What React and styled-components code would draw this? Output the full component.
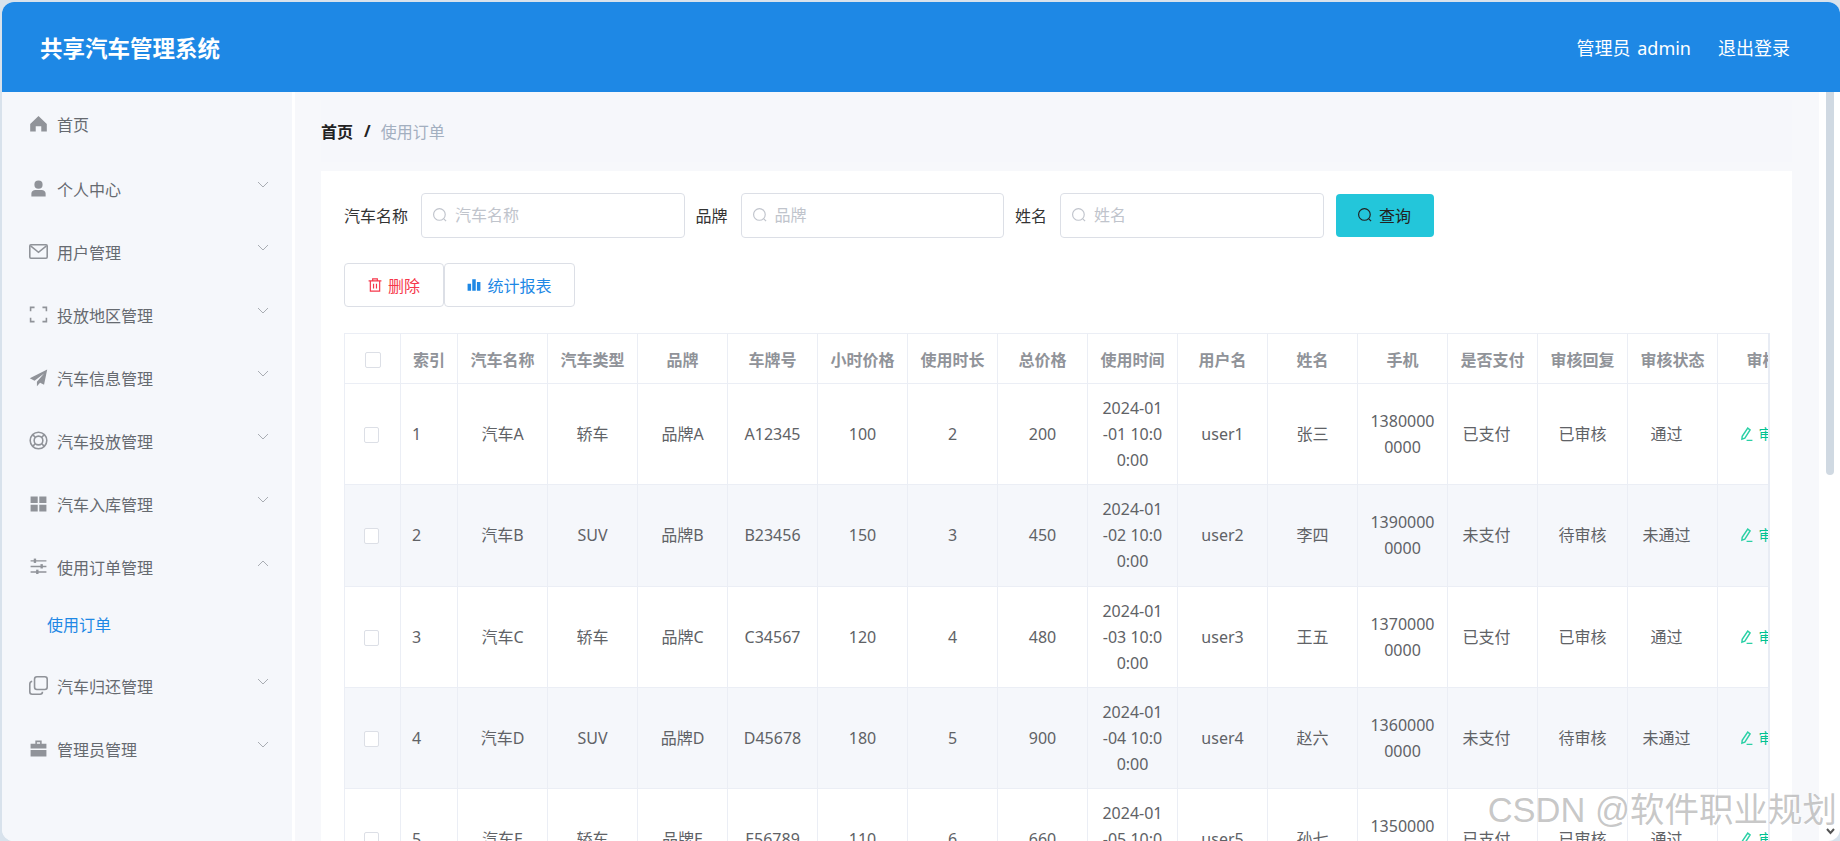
import styled, { createGlobalStyle } from "styled-components";

const GlobalStyle = createGlobalStyle`
  * {
    box-sizing: border-box;
  }

  html,
  body {
    margin: 0;
    height: 100%;
    overflow: hidden;
    font-family: "Noto Sans", "Noto Sans CJK SC", sans-serif;
  }
`;

const Page = styled.div`
  position: relative;
  width: 1840px;
  height: 841px;
  padding: 2px 0 0 2px;
  background-color: #d8e2ec;
  overflow: hidden;
`;

const Frame = styled.div`
  display: flex;
  flex-direction: column;
  height: 100%;
  border-radius: 12px;
  background-color: #fff;
  overflow: hidden;
`;

const TopBar = styled.header`
  display: flex;
  flex: none;
  align-items: center;
  justify-content: space-between;
  height: 90px;
  padding: 0 50px 0 38px;
  background-color: #1e88e5;
  color: #fff;
`;

const Title = styled.h1`
  margin: 0;
  font-size: 22.5px;
  font-weight: 700;
`;

const TopLinks = styled.div`
  display: flex;
  gap: 27px;
  font-size: 18px;
`;

const AdminName = styled.span`
  word-spacing: 2px;
`;

const Body = styled.div`
  display: flex;
  flex: 1;
  min-height: 0;
`;

const Sidebar = styled.nav`
  flex: none;
  width: 290px;
  margin-right: 3px;
  background-color: #f5f7fb;
`;

const NavItem = styled.div`
  display: flex;
  align-items: center;
  height: 63px;
  margin-bottom: ${(p) => (p.$first ? "2px" : "0")};
  padding: 0 23px 0 27px;
  color: #666a70;
  font-size: 16px;
`;

const NavIcon = styled.svg`
  flex: none;
  width: 19px;
  height: 19px;
  margin-right: 9px;
  color: #909399;
`;

const Chevron = styled.svg`
  width: 12px;
  height: 8px;
  margin-left: auto;
  margin-bottom: 7px;
  color: #a9adb3;
`;

const SubItem = styled.div`
  height: 56px;
  padding: 15px 0 0 45px;
  color: #1e88e5;
  font-size: 16px;
  line-height: 24px;
`;

const Main = styled.main`
  display: flex;
  flex: none;
  flex-direction: column;
  width: 1524px;
  padding: 8px 27px 0 26px;
  background-color: #f7f8fb;
`;

const Breadcrumb = styled.div`
  display: flex;
  flex: none;
  align-items: center;
  height: 62px;
  margin-bottom: 9px;
  background-color: #f6f7fb;
  font-size: 16px;
`;

const CrumbHome = styled.span`
  color: #222;
  font-weight: 600;
`;

const CrumbSep = styled.span`
  margin: 0 10px 0 11px;
  color: #222;
  font-weight: 700;
`;

const CrumbCurrent = styled.span`
  color: #a3afc0;
`;

const Card = styled.section`
  flex: 1;
  min-height: 0;
  padding: 22px 0 0 23px;
  background-color: #fff;
  overflow: hidden;
`;

const SearchRow = styled.div`
  display: flex;
  align-items: center;
  gap: 11px;
  height: 44px;
`;

const Field = styled.label`
  display: flex;
  align-items: center;
  gap: 13px;
  color: #333;
  font-size: 16px;
`;

const InputBox = styled.span`
  display: flex;
  align-items: center;
  gap: 8px;
  width: 263.5px;
  height: 45px;
  padding-left: 11px;
  border: 1px solid #dcdfe6;
  border-radius: 4px;
  color: #c0c4cc;
`;

const Input = styled.input`
  flex: 1;
  min-width: 0;
  padding: 0;
  border: 0;
  outline: 0;
  background: transparent;
  font: inherit;
  font-size: 16px;

  &::placeholder {
    color: #c0c4cc;
    opacity: 1;
  }
`;

const SmallIcon = styled.svg`
  flex: none;
  width: 14px;
  height: 14px;
`;

const SearchButton = styled.button`
  display: flex;
  align-items: center;
  justify-content: center;
  gap: 7px;
  width: 98px;
  height: 43px;
  margin-left: 1px;
  padding: 0;
  border: 0;
  border-radius: 4px;
  background-color: #23c6da;
  color: #222;
  font: inherit;
  font-size: 16px;
`;

const ActionRow = styled.div`
  display: flex;
  margin-top: 26px;
`;

const ActionButton = styled.button`
  display: flex;
  align-items: center;
  justify-content: center;
  gap: 6px;
  width: ${(p) => p.$width}px;
  height: 44px;
  padding: 0;
  border: 1px solid #dcdfe6;
  border-radius: 4px;
  background-color: #fff;
  color: ${(p) => p.$color};
  font: inherit;
  font-size: 16px;
`;

const TableWrap = styled.div`
  width: 1426px;
  height: 600px;
  margin-top: 26px;
  border-right: 2px solid #e8ecf4;
  overflow: hidden;
`;

const Table = styled.table`
  width: 1463px;
  border-collapse: collapse;
  table-layout: fixed;
  font-size: 16px;
`;

const HeadCell = styled.th`
  height: 50px;
  padding: 0;
  border: 1px solid #ebeef5;
  color: #909399;
  font-weight: 700;
  text-align: center;
`;

const Row = styled.tr`
  background-color: ${(p) => (p.$striped ? "#f5f7fb" : "#fff")};
`;

const Cell = styled.td`
  height: 101.33px;
  padding: 0 12px 0 ${(p) => (p.$align ? "11px" : "12px")};
  border: 1px solid #ebeef5;
  color: #606266;
  line-height: 26px;
  text-align: ${(p) => p.$align || "center"};
  word-break: break-all;
`;

const Shifted = styled.span`
  padding-right: 12px;
`;

const HeadCheckbox = styled.span`
  display: block;
  width: 16px;
  height: 16px;
  margin: 2px auto 0;
  border: 1px solid #dcdfe6;
  border-radius: 2px;
  background-color: #fff;
`;

const RowCheckbox = styled(HeadCheckbox)`
  width: 15px;
  margin: 2px 0 0 7px;
`;

const ReviewLink = styled.span`
  display: flex;
  align-items: center;
  justify-content: center;
  gap: 6px;
  margin: 0 -12px;
  color: #00c292;
  font-size: 14px;
  white-space: nowrap;
`;

const PencilIcon = styled(SmallIcon)`
  color: #2bd0a6;
`;

const Gutter = styled.div`
  display: flex;
  flex: 1;
  flex-direction: column;
  align-items: flex-start;
  padding-left: 7px;
`;

const ScrollThumb = styled.div`
  width: 8px;
  height: 383px;
  border-radius: 0 0 4px 4px;
  background-color: #d0d9e2;
`;

const ScrollArrow = styled.svg`
  width: 9px;
  height: 7px;
  margin: auto 0 6px;
  color: #555;
`;

const Watermark = styled.div`
  position: absolute;
  right: 3px;
  bottom: 11px;
  color: rgba(120, 120, 120, 0.42);
  font-family: "Liberation Sans", "Noto Sans CJK SC", sans-serif;
  font-size: 34.5px;
  line-height: 40px;
  text-shadow: 1px 1px 1px rgba(255, 255, 255, 0.8);
  white-space: nowrap;
  pointer-events: none;
`;

const icons = {
  home: <path fill="currentColor" d="M12 2.500 1.500 12.500V22h7v-6.500h7V22h7v-9.500z" />,
  user: (
    <path
      fill="currentColor"
      d="M12 2a5.200 5.200 0 1 1 0 10.400A5.200 5.200 0 0 1 12 2zM3 22v-3.600C3 15.500 5.500 14 8 14h8c2.500 0 5 1.500 5 4.400V22z"
    />
  ),
  mail: (
    <g fill="none" stroke="currentColor" strokeWidth="2">
      <rect x="1" y="3.500" width="22" height="17" rx="1.500" />
      <path d="m2 5 10 8 10-8" />
    </g>
  ),
  corners: (
    <path
      fill="none"
      stroke="currentColor"
      strokeWidth="2"
      d="M7 3H2v5M17 3h5v5M7 21H2v-5M17 21h5v-5"
    />
  ),
  send: (
    <path fill="currentColor" d="M23 2 1 13l6 3 12-9-9 10.500V23l4-4.500 5 2.500z" />
  ),
  buoy: (
    <g fill="none" stroke="currentColor" strokeWidth="2">
      <circle cx="12" cy="12" r="10.500" />
      <circle cx="12" cy="12" r="5.500" />
      <path d="m4.500 4.500 3.500 3.500M19.500 4.500 16 8M4.500 19.500 8 16M19.500 19.500 16 16" />
    </g>
  ),
  grid: (
    <path
      fill="currentColor"
      d="M2 3h9v8.500H2zM13 3h9v8.500h-9zM2 13.500h9V22H2zM13 13.500h9V22h-9z"
    />
  ),
  sliders: (
    <g fill="currentColor">
      <path d="M2 4h20v1.800H2zM2 11h20v1.800H2zM2 18h20v1.800H2z" />
      <rect x="6" y="2" width="3" height="5.500" />
      <rect x="14.500" y="9" width="3" height="5.500" />
      <rect x="9" y="16" width="3" height="5.500" />
    </g>
  ),
  copy: (
    <g fill="none" stroke="currentColor" strokeWidth="2">
      <rect x="7" y="1" width="16" height="16" rx="3" />
      <path d="M4 6.500C2 7 1 8 1 10v10c0 2 1 3 3 3h10c2 0 3-1 3-3" />
    </g>
  ),
  case: (
    <path fill="currentColor" d="M8 2h8v4h6v6H2V6h6zm2 2v2h4V4zM2 14h20v8H2z" />
  ),
};

const navItems = [
  { icon: "home", label: "首页", plain: true },
  { icon: "user", label: "个人中心" },
  { icon: "mail", label: "用户管理" },
  { icon: "corners", label: "投放地区管理" },
  { icon: "send", label: "汽车信息管理" },
  { icon: "buoy", label: "汽车投放管理" },
  { icon: "grid", label: "汽车入库管理" },
  { icon: "sliders", label: "使用订单管理", open: true },
  { icon: "copy", label: "汽车归还管理" },
  { icon: "case", label: "管理员管理" },
];

const columns = [
  "索引",
  "汽车名称",
  "汽车类型",
  "品牌",
  "车牌号",
  "小时价格",
  "使用时长",
  "总价格",
  "使用时间",
  "用户名",
  "姓名",
  "手机",
  "是否支付",
  "审核回复",
  "审核状态",
  "审核",
];

const orders = [
  ["1", "汽车A", "轿车", "品牌A", "A12345", "100", "2", "200", "2024-01-01 10:00:00", "user1", "张三", "13800000000", "已支付", "已审核", "通过"],
  ["2", "汽车B", "SUV", "品牌B", "B23456", "150", "3", "450", "2024-01-02 10:00:00", "user2", "李四", "13900000000", "未支付", "待审核", "未通过"],
  ["3", "汽车C", "轿车", "品牌C", "C34567", "120", "4", "480", "2024-01-03 10:00:00", "user3", "王五", "13700000000", "已支付", "已审核", "通过"],
  ["4", "汽车D", "SUV", "品牌D", "D45678", "180", "5", "900", "2024-01-04 10:00:00", "user4", "赵六", "13600000000", "未支付", "待审核", "未通过"],
  ["5", "汽车E", "轿车", "品牌E", "E56789", "110", "6", "660", "2024-01-05 10:00:00", "user5", "孙七", "13500000000", "已支付", "已审核", "通过"],
];

function SearchIcon() {
  return (
    <SmallIcon viewBox="0 0 24 24" fill="none" stroke="currentColor" strokeWidth="2">
      <circle cx="11" cy="11" r="10" />
      <path d="m18.500 18.500 4 4" />
    </SmallIcon>
  );
}

function SearchField({ label }) {
  return (
    <Field>
      {label}
      <InputBox>
        <SearchIcon />
        <Input placeholder={label} />
      </InputBox>
    </Field>
  );
}

function App() {
  return (
    <Page>
      <GlobalStyle />
      <Frame>
        <TopBar>
          <Title>共享汽车管理系统</Title>
          <TopLinks>
            <AdminName>管理员 admin</AdminName>
            <span>退出登录</span>
          </TopLinks>
        </TopBar>

        <Body>
          <Sidebar>
            {navItems.map((item) => (
              <div key={item.label}>
                <NavItem $first={item.plain}>
                  <NavIcon viewBox="0 0 24 24">{icons[item.icon]}</NavIcon>
                  {item.label}
                  {!item.plain && (
                    <Chevron viewBox="0 0 12 8" fill="none" stroke="currentColor">
                      <path d={item.open ? "M1 7l5-5 5 5" : "M1 1l5 5 5-5"} />
                    </Chevron>
                  )}
                </NavItem>
                {item.open && <SubItem>使用订单</SubItem>}
              </div>
            ))}
          </Sidebar>

          <Main>
            <Breadcrumb>
              <CrumbHome>首页</CrumbHome>
              <CrumbSep>/</CrumbSep>
              <CrumbCurrent>使用订单</CrumbCurrent>
            </Breadcrumb>

            <Card>
              <SearchRow>
                <SearchField label="汽车名称" />
                <SearchField label="品牌" />
                <SearchField label="姓名" />
                <SearchButton>
                  <SearchIcon />
                  查询
                </SearchButton>
              </SearchRow>

              <ActionRow>
                <ActionButton $width={100} $color="#f6374b">
                  <SmallIcon viewBox="0 0 24 24" fill="none" stroke="currentColor" strokeWidth="2">
                    <path d="M1 5h22M8 5V1.500h8V5M4 5v17.500h16V5M9.500 10v8M14.500 10v8" />
                  </SmallIcon>
                  删除
                </ActionButton>
                <ActionButton $width={131} $color="#1e88e5">
                  <SmallIcon viewBox="0 0 24 24" fill="currentColor">
                    <path d="M1 10h6v12H1zM9 2h6v20H9zM17 7h6v15h-6z" />
                  </SmallIcon>
                  统计报表
                </ActionButton>
              </ActionRow>

              <TableWrap>
                <Table>
                  <colgroup>
                    <col width="56" />
                    <col width="57" />
                    {columns.slice(1).map((name) => (
                      <col key={name} width="90" />
                    ))}
                  </colgroup>
                  <thead>
                    <tr>
                      <HeadCell>
                        <HeadCheckbox />
                      </HeadCell>
                      {columns.map((name) => (
                        <HeadCell key={name}>{name}</HeadCell>
                      ))}
                    </tr>
                  </thead>
                  <tbody>
                    {orders.map((order, rowIndex) => (
                      <Row key={order[0]} $striped={rowIndex % 2 === 1}>
                        <Cell>
                          <RowCheckbox />
                        </Cell>
                        {order.map((value, i) => (
                          <Cell key={i} $align={i === 0 ? "left" : undefined}>
                            {i === 12 || i === 14 ? <Shifted>{value}</Shifted> : value}
                          </Cell>
                        ))}
                        <Cell>
                          <ReviewLink>
                            <PencilIcon viewBox="0 0 24 24" fill="none" stroke="currentColor" strokeWidth="2.500">
                              <path d="M15 2l4 3-9 14-5 2 .5-5zM13 23h10" />
                            </PencilIcon>
                            审核
                          </ReviewLink>
                        </Cell>
                      </Row>
                    ))}
                  </tbody>
                </Table>
              </TableWrap>
            </Card>
          </Main>

          <Gutter>
            <ScrollThumb />
            <ScrollArrow viewBox="0 0 9 7" fill="none" stroke="currentColor" strokeWidth="2">
              <path d="m1 1 3.500 4L8 1" />
            </ScrollArrow>
          </Gutter>
        </Body>
      </Frame>
      <Watermark>CSDN @软件职业规划</Watermark>
    </Page>
  );
}

export default App;
